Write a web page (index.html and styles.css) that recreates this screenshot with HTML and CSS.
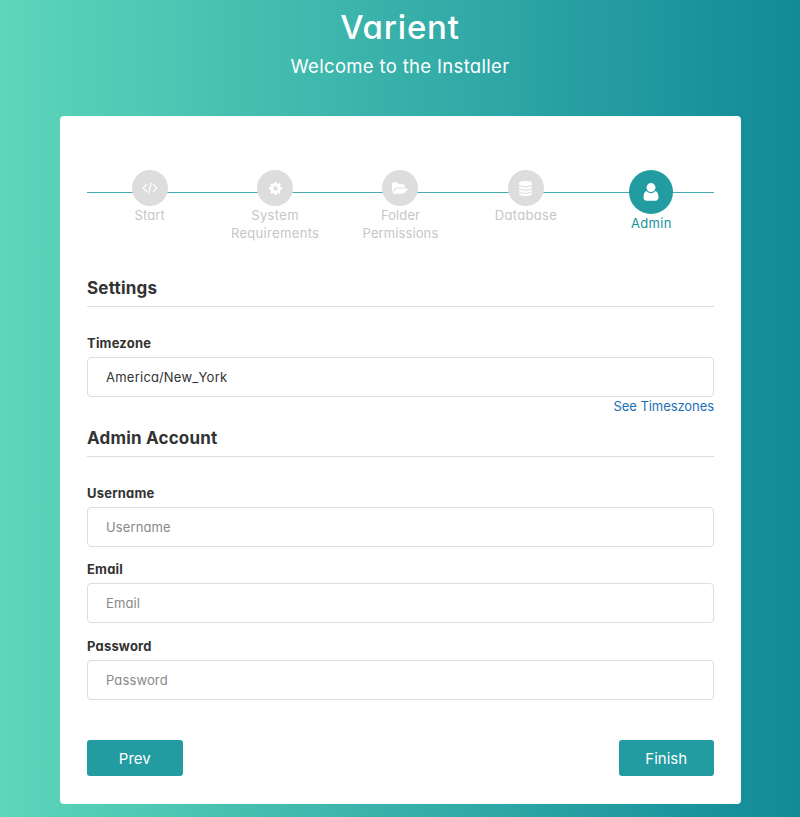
FILE: index.html
```html
<!DOCTYPE html>
<html lang="en">
<head>
<meta charset="utf-8">
<title>Varient - Installer</title>
<link rel="stylesheet" href="styles.css">
</head>
<body>
<header class="header">
  <h1 class="title">Varient</h1>
  <p class="subtitle">Welcome to the Installer</p>
</header>
<main class="card">
  <ol class="steps">
    <li class="step">
      <div class="step-icon"><svg width="16" height="14" viewBox="0 0 16 14" fill="none" stroke="#fff" stroke-width="1.2"><path d="M4.9 3.2 1.1 7l3.8 3.8M11.1 3.2 14.9 7l-3.8 3.8M9.3 1.6 6.7 12.4"/></svg></div>
      <p class="step-label">Start</p>
    </li>
    <li class="step">
      <div class="step-icon"><svg width="13" height="13" viewBox="0 0 1536 1536" fill="#fff"><path d="M1024 768q0-106-75-181t-181-75-181 75-75 181 75 181 181 75 181-75 75-181zm512-109v222q0 12-8 23t-20 13l-185 28q-19 54-39 91 35 50 107 138 10 12 10 25t-9 23q-27 37-99 108t-94 71q-12 0-26-9l-138-108q-44 23-91 38-16 136-29 186-7 28-36 28H657q-14 0-24.500-8.500T621 1506l-28-184q-49-16-90-37l-141 107q-10 9-25 9-14 0-25-11-126-114-165-168-7-10-7-23 0-12 8-23 15-21 51-66.500t54-70.500q-27-50-41-99L29 913q-13-2-21-12.500T0 877V655q0-12 8-23t19-13l186-28q14-46 39-92-40-57-107-138-10-12-10-24 0-10 9-23 26-36 98.500-107.500T337 135q13 0 26 10l138 107q44-23 91-38 16-136 29-186 7-28 36-28h222q14 0 24.500 8.500T915 30l28 184q49 16 90 37l142-107q9-9 24-9 13 0 25 10 129 119 165 170 7 8 7 22 0 12-8 23-15 21-51 66.500t-54 70.500q26 50 41 98l183 28q13 2 21 12.500t8 23.500z"/></svg></div>
      <p class="step-label wide">System<br>Requirements</p>
    </li>
    <li class="step">
      <div class="step-icon"><svg width="16" height="12" viewBox="0 -48 1920 1408" fill="#fff"><path d="M1879 776q0 31-31 66l-336 396q-43 51-120.500 86.500T1248 1360H160q-34 0-60.500-13T73 1304q0-31 31-66l336-396q43-51 120.500-86.500T704 720h1088q34 0 60.500 13t26.500 43zM1536 432v160H704q-94 0-197 47.500T343 759L6 1155l-5 6q0-4-.5-12.500T0 1136V176q0-92 66-158T224-48h320q92 0 158 66t66 158v32h544q92 0 158 66t66 158z"/></svg></div>
      <p class="step-label">Folder<br>Permissions</p>
    </li>
    <li class="step">
      <div class="step-icon"><svg width="13" height="15" viewBox="0 0 1536 1792" fill="#fff"><path d="M768 768q237 0 443-43t325-127v170q0 69-103 128t-280 93.500-385 34.500-385-34.500T103 896 0 768V598q119 84 325 127t443 43zm0 768q237 0 443-43t325-127v170q0 69-103 128t-280 93.500-385 34.500-385-34.500T103 1664 0 1536v-170q119 84 325 127t443 43zm0-384q237 0 443-43t325-127v170q0 69-103 128t-280 93.500-385 34.500-385-34.500T103 1280 0 1152V982q119 84 325 127t443 43zM768 0q208 0 385 34.500t280 93.500 103 128v128q0 69-103 128t-280 93.500T768 640t-385-34.500T103 512 0 384V256q0-69 103-128t280-93.500T768 0z"/></svg></div>
      <p class="step-label wide">Database</p>
    </li>
    <li class="step active">
      <div class="step-icon"><svg width="16" height="18" viewBox="0 0 16 18" fill="#fff"><path d="M3.700 8.100C1.500 8.400.5 11 .5 14.300.5 16.500 1.700 17.800 3.500 17.800h9c1.800 0 3-1.300 3-3.500 0-3.300-1-5.900-3.200-6.200C11.200 9.500 9.700 10.200 8 10.200S4.800 9.500 3.700 8.100z"/><circle cx="8" cy="4.600" r="4.500"/></svg></div>
      <p class="step-label wide">Admin</p>
    </li>
  </ol>
  <form class="form">
    <h2 class="section">Settings</h2>
    <label class="label" for="timezone">Timezone</label>
    <input class="input timezone" id="timezone" type="text" value="America/New_York">
    <a class="link" href="#">See Timeszones</a>
    <h2 class="section account">Admin Account</h2>
    <label class="label" for="username">Username</label>
    <input class="input" id="username" type="text" placeholder="Username">
    <label class="label" for="email">Email</label>
    <input class="input" id="email" type="text" placeholder="Email">
    <label class="label" for="password">Password</label>
    <input class="input" id="password" type="password" placeholder="Password">
    <div class="actions">
      <button class="button" type="button">Prev</button>
      <button class="button" type="button">Finish</button>
    </div>
  </form>
</main>
</body>
</html>
```
FILE: styles.css
```css
* { box-sizing: border-box; }

body {
  margin: 0;
  height: 817px;
  overflow: hidden;
  font-family: Inter, "Open Sans", sans-serif;
  font-feature-settings: "cv11";
  color: #333;
  background: linear-gradient(90deg, #5dd6bb 0%, #128a98 100%);
}

h1, h2, p, ol { margin: 0; padding: 0; }

.header { height: 116px; padding-top: 1px; text-align: center; color: #fff; }
.title { font-size: 33px; font-weight: 500; line-height: 52px; letter-spacing: 0.800px; }
.subtitle { font-size: 18.500px; line-height: 27px; letter-spacing: 0.330px; }

.card {
  width: 681px;
  height: 688px;
  margin-left: 60px;
  padding: 54px 27px 0;
  background: #fff;
  border-radius: 4px;
}

.steps {
  display: grid;
  grid-template-columns: repeat(5, 1fr);
  height: 108px;
  list-style: none;
  background: linear-gradient(#45acb0, #45acb0) 0 22px / 100% 1px no-repeat;
}
.step { display: flex; flex-direction: column; align-items: center; }
.step-icon {
  display: flex;
  align-items: center;
  justify-content: center;
  width: 36px;
  height: 36px;
  border-radius: 50%;
  background: #ddd;
}
.step-label {
  font-size: 13px;
  line-height: 18px;
  text-align: center;
  letter-spacing: 0.100px;
  color: #c6c6c6;
}
.wide { letter-spacing: 0.330px; }
.active .step-icon { width: 44px; height: 44px; background: #229ba1; }
.active .step-label { color: #16929a; }

.form { display: flex; flex-direction: column; }
.section {
  height: 29px;
  margin-bottom: 28px;
  border-bottom: 1px solid #ddd;
  font-size: 17px;
  font-weight: 700;
  line-height: 21px;
  letter-spacing: 0.200px;
}
.account { margin-top: 13px; }
.label {
  height: 22px;
  font-size: 13px;
  font-weight: 700;
  line-height: 17px;
  letter-spacing: 0.200px;
}
.input {
  height: 40px;
  margin: 0 0 14.300px;
  padding: 0 18px;
  border: 1px solid #ddd;
  border-radius: 4px;
  background: #fff;
  font: 400 13px Inter, sans-serif;
  font-feature-settings: "cv11";
  letter-spacing: 0.250px;
  color: #333;
}
.input::placeholder { color: #888; opacity: 1; letter-spacing: 0.120px; }
.timezone { margin-bottom: 0; }
.link {
  align-self: flex-end;
  font-size: 13px;
  line-height: 18px;
  letter-spacing: -0.070px;
  color: #1b6fb5;
  text-decoration: none;
}
.actions { display: flex; justify-content: space-between; margin-top: 26.500px; }
.button {
  width: 95.500px;
  height: 36px;
  padding: 0;
  border: 0;
  border-radius: 3px;
  background: #229ba1;
  color: #fff;
  font: 400 15px Inter, sans-serif;
  font-feature-settings: "cv11";
}
```
